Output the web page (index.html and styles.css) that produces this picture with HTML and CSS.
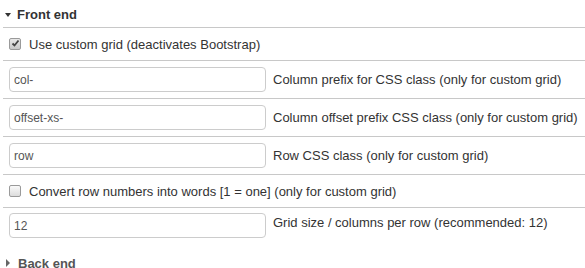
FILE: index.html
```html
<!DOCTYPE html>
<html>
<head>
<meta charset="utf-8">
<link rel="stylesheet" href="styles.css">
</head>
<body>
<div class="panel">
  <div class="sec-head open"><span class="caret-down"></span>Front end</div>
  <div class="rows">
    <label class="row check-row">
      <span class="cb checked"><svg width="11" height="11" viewBox="0 0 11 11"><path d="M2.5 5.5 L4.5 7.5 L8.5 2.5" fill="none" stroke="#444" stroke-width="1.8"/></svg></span>
      <span class="lbl">Use custom grid (deactivates Bootstrap)</span>
    </label>
    <div class="row field-row">
      <input type="text" class="txt" value="col-">
      <span class="lbl">Column prefix for CSS class (only for custom grid)</span>
    </div>
    <div class="row field-row">
      <input type="text" class="txt" value="offset-xs-">
      <span class="lbl">Column offset prefix CSS class (only for custom grid)</span>
    </div>
    <div class="row field-row">
      <input type="text" class="txt" value="row">
      <span class="lbl">Row CSS class (only for custom grid)</span>
    </div>
    <label class="row check-row">
      <span class="cb"></span>
      <span class="lbl">Convert row numbers into words [1 = one] (only for custom grid)</span>
    </label>
    <div class="row field-row last">
      <input type="text" class="txt" value="12">
      <span class="lbl">Grid size / columns per row (recommended: 12)</span>
    </div>
  </div>
  <div class="sec-head closed"><span class="caret-right"></span>Back end</div>
</div>
</body>
</html>
```
FILE: styles.css
```css
html, body {
  margin: 0;
  padding: 0;
  background: #fff;
}
.panel {
  font-family: "Liberation Sans", Arial, sans-serif;
  font-size: 13px;
  color: #333;
  padding-left: 3px;
}
.sec-head {
  display: flex;
  align-items: center;
  height: 25px;
  padding-top: 2px;
  font-weight: bold;
  color: #333;
  padding-left: 2px;
}
.sec-head.closed {
  color: #555;
  margin-top: 8px;
  height: 20px;
  padding-top: 0;
}
.caret-down {
  width: 0;
  height: 0;
  border-left: 3.5px solid transparent;
  border-right: 3.5px solid transparent;
  border-top: 4px solid #333;
  margin-right: 6px;
  margin-top: 1px;
}
.caret-right {
  width: 0;
  height: 0;
  border-top: 4px solid transparent;
  border-bottom: 4px solid transparent;
  border-left: 4px solid #666;
  margin-left: 1px;
  margin-right: 8px;
}
.row {
  display: flex;
  align-items: center;
  border-top: 1px solid #c8c8c8;
}
.check-row {
  height: 32px;
  padding-left: 6px;
}
.field-row {
  height: 37px;
  padding-left: 6px;
}
.row.last {
  height: 32px;
  align-items: flex-start;
  padding-top: 5px;
}
.cb {
  box-sizing: border-box;
  display: flex;
  align-items: center;
  justify-content: center;
  width: 12px;
  height: 12px;
  margin: 0 8px 0 0;
  border: 1px solid #9a9a9a;
  border-radius: 2px;
  background: linear-gradient(#fafafa, #dcdcdc);
}
.cb.checked {
  background: linear-gradient(#e8e8e8, #c8c8c8);
}
.cb svg {
  flex: none;
  margin-top: -1px;
}
.txt {
  box-sizing: border-box;
  width: 257px;
  height: 25px;
  border: 1px solid #ccc;
  border-radius: 4px;
  padding: 0 4px;
  margin: 0 7px 0 0;
  font-family: "Liberation Sans", Arial, sans-serif;
  font-size: 12px;
  color: #555;
  background: #fff;
}
.row.last .lbl {
  margin-top: 2px;
}
.lbl {
  white-space: nowrap;
}
```
